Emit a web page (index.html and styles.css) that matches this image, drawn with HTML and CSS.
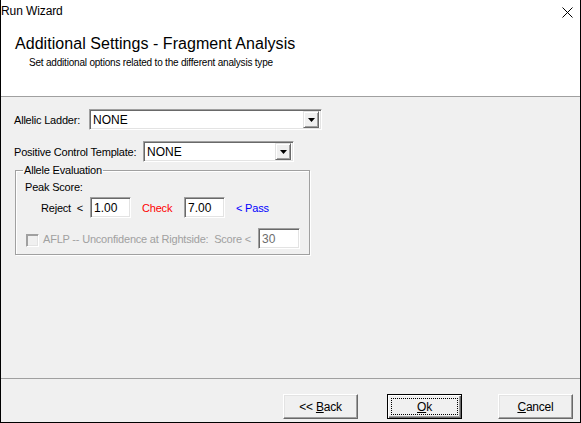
FILE: index.html
```html
<!DOCTYPE html>
<html>
<head>
<meta charset="utf-8">
<link rel="stylesheet" href="styles.css">
</head>
<body>
<div class="window">
  <div class="titlebar">
    <span class="title-text">Run Wizard</span>
    <svg class="close" width="11" height="11" viewBox="0 0 11 11"><path d="M0.5 0.5 L10.5 10.5 M10.5 0.5 L0.5 10.5" stroke="#000" stroke-width="1" fill="none"/></svg>
  </div>
  <div class="header">
    <div class="heading">Additional Settings - Fragment Analysis</div>
    <div class="subheading">Set additional options related to the different analysis type</div>
  </div>
  <div class="content">
    <div class="row row-ladder">
      <span class="label label-ladder">Allelic Ladder:</span>
      <div class="combo combo-ladder"><span class="combo-value">NONE</span><span class="combo-btn"><svg width="7" height="4" viewBox="0 0 7 4"><path d="M0 0 H7 L3.5 4 Z" fill="#000"/></svg></span></div>
    </div>
    <div class="row row-pct">
      <span class="label label-pct">Positive Control Template:</span>
      <div class="combo combo-pct"><span class="combo-value">NONE</span><span class="combo-btn"><svg width="7" height="4" viewBox="0 0 7 4"><path d="M0 0 H7 L3.5 4 Z" fill="#000"/></svg></span></div>
    </div>
    <fieldset class="group">
      <legend>Allele Evaluation</legend>
      <div class="peak">Peak Score:</div>
      <div class="score-row">
        <span class="reject">Reject &nbsp;&lt;</span>
        <span class="edit edit-reject">1.00</span>
        <span class="check">Check</span>
        <span class="edit edit-check">7.00</span>
        <span class="pass">&lt; Pass</span>
      </div>
      <div class="aflp-row">
        <span class="checkbox"></span>
        <span class="aflp-label">AFLP -- Unconfidence at Rightside:&nbsp; Score &lt;</span>
        <span class="edit edit-disabled">30</span>
      </div>
    </fieldset>
  </div>
  <div class="footer">
    <button class="btn btn-back">&lt;&lt; <u>B</u>ack</button>
    <button class="btn btn-ok"><span class="focus"><u>O</u>k</span></button>
    <button class="btn btn-cancel"><u>C</u>ancel</button>
  </div>
</div>
</body>
</html>
```
FILE: styles.css
```css
* { box-sizing: border-box; }
html, body { margin: 0; padding: 0; }
body {
  font-family: "Liberation Sans", Arial, sans-serif;
  font-size: 11px;
  letter-spacing: -0.2px;
  color: #000;
  background: #fff;
}
.window {
  width: 581px;
  height: 423px;
  border-left: 1px solid #000;
  border-right: 1px solid #000;
  border-bottom: 1px solid #000;
  background: #f0f0f0;
  display: flex;
  flex-direction: column;
}
.titlebar {
  height: 22px;
  background: #fff;
  display: flex;
  align-items: center;
  justify-content: space-between;
  padding: 0 7px 0 0;
}
.title-text {
  font-size: 12px;
  line-height: 14px;
  letter-spacing: -0.1px;
}
.close { margin-top: 2px; }
.header {
  height: 75px;
  background: #fff;
  border-bottom: 1px solid #a0a0a0;
  padding: 12px 0 0 14px;
}
.heading {
  font-size: 16px;
  line-height: 20px;
  letter-spacing: 0.05px;
}
.subheading {
  padding-left: 14px;
  margin-top: 2px;
  line-height: 13px;
  font-size: 10px;
  letter-spacing: -0.2px;
}
.content {
  flex: 1;
  padding: 12px 0 0 13px;
}
.row {
  display: flex;
  align-items: center;
  height: 21px;
}
.row-pct { margin-top: 11px; }
.label-ladder { width: 75px; }
.label-pct { width: 129px; }
.combo {
  height: 21px;
  background: #fff;
  border-style: solid;
  border-width: 1px;
  border-color: #a0a0a0 #fff #fff #a0a0a0;
  box-shadow: inset 1px 1px 0 #696969, inset -1px -1px 0 #e3e3e3;
  display: flex;
  align-items: center;
  justify-content: space-between;
  padding: 2px 2px 2px 3px;
  letter-spacing: 0;
}
.combo-ladder { width: 233px; }
.combo-pct { width: 151px; }
.combo-value { font-size: 12px; }
.combo-btn {
  width: 16px;
  height: 17px;
  background: #f0f0f0;
  border-style: solid;
  border-width: 1px;
  border-color: #e3e3e3 #696969 #696969 #e3e3e3;
  box-shadow: inset 1px 1px 0 #fff, inset -1px -1px 0 #a0a0a0;
  display: flex;
  align-items: center;
  justify-content: center;
}
.group {
  margin: 2px 0 0 1px;
  width: 295px;
  height: 91px;
  border: 1px solid #a0a0a0;
  box-shadow: inset 1px 1px 0 #fff, 1px 1px 0 #fff;
  padding: 0 0 0 9px;
}
.group legend {
  padding: 0 1px;
  margin-left: -2px;
  line-height: 12px;
  font-size: 11px;
}
.peak {
  margin-top: 5px;
  line-height: 13px;
}
.score-row {
  display: flex;
  align-items: center;
  margin-top: 3px;
  height: 21px;
}
.reject { margin-left: 16px; width: 49px; }
.edit {
  height: 21px;
  width: 41px;
  background: #fff;
  border-style: solid;
  border-width: 1px;
  border-color: #a0a0a0 #fff #fff #a0a0a0;
  box-shadow: inset 1px 1px 0 #696969, inset -1px -1px 0 #e3e3e3;
  padding: 3px 0 0 3px;
  font-size: 12px;
  line-height: 14px;
  letter-spacing: 0;
}
.check { color: #ff0000; margin-left: 11px; width: 42px; }
.pass { color: #0000ff; margin-left: 11px; }
.aflp-row {
  display: flex;
  align-items: center;
  margin-top: 10px;
  height: 21px;
  color: #a0a0a0;
}
.checkbox {
  width: 13px;
  height: 13px;
  border-style: solid;
  border-width: 1px;
  border-color: #a0a0a0 #fff #fff #a0a0a0;
  box-shadow: inset 1px 1px 0 #a0a0a0, inset -1px -1px 0 #e3e3e3;
  background: #f0f0f0;
  margin-left: 1px;
  margin-right: 4px;
  margin-top: 3px;
}
.aflp-label { width: 215px; }
.edit-disabled {
  background: #fff;
  color: #6d6d6d;
  width: 42px;
}
.footer {
  height: 44px;
  border-top: 1px solid #a0a0a0;
  display: flex;
  align-items: flex-start;
  padding: 15px 0 0 282px;
}
.btn {
  width: 75px;
  height: 25px;
  font-family: "Liberation Sans", Arial, sans-serif;
  font-size: 12px;
  letter-spacing: -0.2px;
  background: #f0f0f0;
  border-style: solid;
  border-width: 1px;
  border-color: #fff #696969 #696969 #fff;
  box-shadow: inset -1px -1px 0 #a0a0a0, inset 1px 1px 0 #e3e3e3;
  padding: 0;
  color: #000;
}
.btn-ok {
  margin-left: 29px;
  border: 1px solid #000;
  box-shadow: inset 1px 1px 0 #fff, inset -1px -1px 0 #696969, inset -2px -2px 0 #a0a0a0;
  padding: 3px;
}
.btn-ok .focus {
  display: flex;
  align-items: center;
  justify-content: center;
  width: 100%;
  height: 100%;
  border: 1px dotted #000;
}
.btn-cancel { margin-left: 36px; }
```
